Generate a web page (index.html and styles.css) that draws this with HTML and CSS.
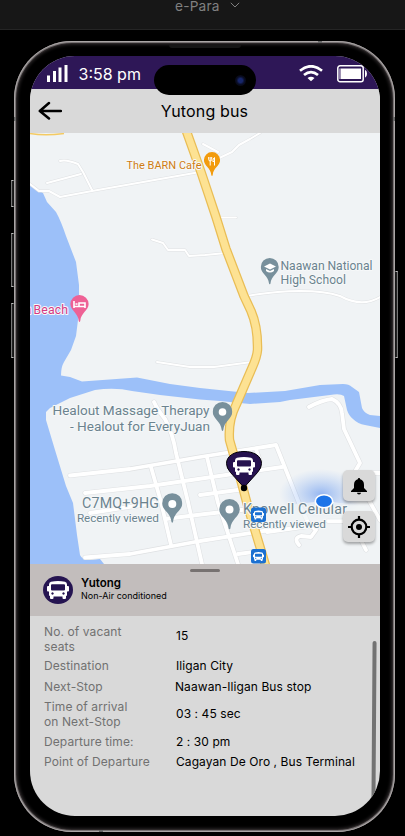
FILE: index.html
```html
<!DOCTYPE html>
<html lang="en">
<head>
<meta charset="utf-8">
<title>e-Para</title>
<link rel="stylesheet" href="styles.css">
</head>
<body>
<svg class="defs" aria-hidden="true">
  <symbol id="bus" viewBox="0 0 22 18">
    <path fill="currentColor" fill-rule="evenodd" d="M4 0.8Q11-.8 18 .8Q20 1.3 20 3.5V5h1q1 0 1 1v3.5q0 1-1 1h-1V14q0 1-1 1V17q0 1-1 1h-1.500q-1 0-1-1V15.500H6.500V17q0 1-1 1H4q-1 0-1-1V15q-1 0-1-1V10.500H1q-1 0-1-1V6q0-1 1-1H2V3.500Q2 1.300 4 .8ZM5 3.300Q4 3.300 4 4.300V8.500q0 1 1 1H17q1 0 1-1V4.300q0-1-1-1ZM5.500 11.300a1.200 1.200 0 1 0 .01 0ZM16.500 11.300a1.200 1.200 0 1 0 .01 0Z"/>
  </symbol>
  <symbol id="pin" viewBox="0 0 20 29">
    <path fill="currentColor" d="M10 0A9.800 9.800 0 0 0 .2 9.800C.2 17 8.500 19 9.200 28Q10 30 10.800 28C11.500 19 19.800 17 19.800 9.800A9.800 9.800 0 0 0 10 0Z"/>
  </symbol>
</svg>

<header class="toolbar">
  <span class="toolbar-title">e-Para</span>
  <svg class="chevron" width="10" height="6" viewBox="0 0 10 6"><path d="M.8.8 5 5 9.200.8"/></svg>
</header>

<main class="phone">
  <i class="side-button mute"></i><i class="side-button volume-up"></i><i class="side-button volume-down"></i><i class="side-button power"></i>
  <i class="antenna a1"></i><i class="antenna a2"></i><i class="antenna a3"></i><i class="antenna a4"></i>
  <i class="speaker"></i>
  <div class="island"><i class="camera"></i></div>
  <div class="screen">
    <div class="status">
      <svg class="signal" width="21" height="17" viewBox="0 0 21 17" fill="#fff"><path d="M0 10.500h3V17H0ZM6 6h3v11H6ZM11.500 2.500h3V17h-3ZM17.500 0h3v17h-3Z"/></svg>
      <span class="time">3:58 pm</span>
      <svg class="wifi" width="24" height="17" viewBox="0 0 24 17" fill="none" stroke="#fff" stroke-width="2.700"><path d="M1 5.700Q12-3.200 23 5.700M5 10Q12 4.300 19 10"/><path d="M8.500 13Q12 10.300 15.500 13L12 16.300Z" fill="#fff" stroke="none"/></svg>
      <svg class="battery" width="31" height="18" viewBox="0 0 31 18"><rect x=".8" y=".8" width="25.400" height="15.900" rx="2.300" fill="none" stroke="#fff" stroke-width="1.500"/><path fill="#fff" d="M3.500 3.500h20.500v10.500H3.500ZM28 4.800q2 1 2 4t-2 4Z"/><path d="M2.800 3.500v10.500" stroke="#b5a9ca"/></svg>
    </div>
    <div class="appbar">
      <svg class="back" width="24" height="20" viewBox="0 0 24 20"><path d="M23 10H1.800M11 2 1.800 10 11 17.500"/></svg>
      <h1>Yutong bus</h1>
    </div>
    <div class="map">
      <svg width="350" height="431" viewBox="30 133 350 431">
        <defs>
          <radialGradient id="beam"><stop offset="0" stop-color="#4c86ee" stop-opacity=".55"/><stop offset=".4" stop-color="#6b9cf0" stop-opacity=".35"/><stop offset="1" stop-color="#8db5f5" stop-opacity="0"/></radialGradient>
        </defs>
        <rect x="30" y="133" width="350" height="431" fill="#f0f3f5"/>
        <path fill="#9cc0f9" d="M30 184 38 190 43 193 47 202 56 212Q61 221 66 236L76 262 79 285V312L76 336 71 350 64 362Q61 367 61 375.500L70 377 82 381.500 137 377.500 170 384 200 388 248 393 285 391 320 385 343 384Q349 384 352 387L359 392 362 408Q364 413 370 415L380 416V428L365 425Q358 424 353 419 349 416 347 410L344 396Q340 393 330 395L290 400 280 402 250 404 220 401 200 399.500 160 395 132 391Q115 387 95 390L70 398 50 408 46 412V420L55 450 66 486 73 503 77 535 80 555Q82 560 90 560L100 559 104 564H30Z"/>
        <g class="road-edge">
          <path id="r1" d="M30 184 39 191H49L60 197 92 191 200 172M60 161Q66 159 78 164L83 172 92 190M47 183 81 174"/>
          <path id="r2" d="M152 239.500 163 243 168 250H185L189 256 205 255 226 253M218 217.500H236M247 296Q275 291 300 291T340 296Q362 308 380 297"/>
          <path id="r3" d="M203 144 218 152M213 161 232 152 239 145 250 139 260 133M157 362 190 367 214 367 252 362"/>
        </g>
        <g class="road"><use href="#r1"/><use href="#r2"/><use href="#r3"/></g>
        <g class="street-edge">
          <path id="s1" d="M154 402Q157 409 165 419 173 434 176 453L188 502 202 564M70 475.500 130 469 200 457 276 445 299 503M85 493 150 486 205 478 282 467"/>
          <path id="s2" d="M151 467 161 502 171 545M165 519 205 514 250 509M85 557.500 130 554 200 541 270 530M207 457 218 503 238 564M256 449 260 461M200 495 245 489M90 513 155 503"/>
          <path id="s3" d="M309 407Q322 400 332 399 341 403 342 413L344 429 360 463 347 485M366 473H380M366 495 380 520M328 521 344 521M299 545Q293 538 301 536L311 537 316 530 309 524 301 508M238 554 260 551M359 536 366 550M267 532 310 526"/>
        </g>
        <g class="street"><use href="#s1"/><use href="#s2"/><use href="#s3"/></g>
        <path d="M30 133.500Q45 136 64 133.500" fill="none" stroke="#f4ca62" stroke-width="1.500"/>
        <g class="highway-edge">
          <path id="hw" d="M186 130 201 172 216 217 226 249 244 296 251 311Q258 327 257.500 350 257 357 252 368L236 405Q228 421 229.500 440L240 477 248 507 266 567"/>
        </g>
        <g class="highway"><use href="#hw"/></g>
        <ellipse cx="321" cy="494" rx="42" ry="25" fill="url(#beam)"/>
        <path d="M278 506 324 501 365 506V520H278Z" fill="#f0f3f5" opacity=".7"/>

        <g class="label">
          <text class="orange" x="126.500" y="169" font-size="11" textLength="75">The BARN Cafe</text>
          <text class="pink" x="33.500" y="314" font-size="12.300" textLength="34.500">Beach</text>
          <text class="pink" x="24.500" y="314" font-size="12.300">n</text>
          <text x="280.500" y="269.500" font-size="12.200" textLength="92">Naawan National</text>
          <text x="280.500" y="284" font-size="12.200" textLength="65.500">High School</text>
          <text x="52.500" y="414.500" font-size="13.600" textLength="157">Healout Massage Therapy</text>
          <text x="70" y="430.500" font-size="13.600" textLength="140">- Healout for EveryJuan</text>
          <text x="82" y="508" font-size="14.300" textLength="77">C7MQ+9HG</text>
          <text x="77" y="522" font-size="11.800" textLength="82">Recently viewed</text>
          <text x="243" y="513.500" font-size="14.300" textLength="104">Knowell Cellular</text>
          <text x="243" y="528" font-size="11.800" textLength="83">Recently viewed</text>
        </g>

        <use href="#pin" x="203.500" y="152" width="17" height="24" color="#f29b0d"/>
        <path d="M208.700 157v2.500q0 1.500 1.500 1.500t1.500-1.500v-2.500M210.200 157v8.500M214.500 165.500v-8q-1.700 1-1.700 4h1.700" fill="none" stroke="#fff" stroke-width="1"/>
        <use href="#pin" x="70" y="295" width="19" height="27" color="#ee6195"/>
        <path d="M74 301v7M74 306.500H85V308M85 306v-3h-6v3M75.500 304h2" fill="none" stroke="#fff" stroke-width="1.600"/>
        <use href="#pin" x="260.500" y="258" width="18.500" height="26.500" color="#78909c"/>
        <path d="m264 266.500 6-3 6 3-6 3Zm2 2.500 4 2 4-2v2q-4 3-8 0Z" fill="#fff"/>
        <use href="#pin" x="212.500" y="402" width="20" height="29" color="#78909c"/><circle cx="222.500" cy="412" r="3.800" fill="#fff"/>
        <use href="#pin" x="162" y="493" width="20.500" height="30" color="#78909c"/><circle cx="172.300" cy="504" r="4" fill="#fff"/>
        <use href="#pin" x="219" y="499" width="21" height="30.500" color="#78909c"/><circle cx="229.500" cy="509.500" r="4" fill="#fff"/>

        <g color="#fff">
          <rect x="251" y="507.500" width="15" height="14.500" rx="2.500" fill="#1b70d1"/><use href="#bus" x="253" y="510" width="11" height="10"/>
          <rect x="251" y="549" width="15" height="14.500" rx="2.500" fill="#1b70d1"/><use href="#bus" x="253" y="551.500" width="11" height="10"/>
        </g>
        <path d="M244 487.500 230.500 472.500Q226.500 468 226.500 463.500C226.500 456 234 451.500 244 451.500S261.500 456 261.500 463.500Q261.500 468 257.500 472.500Z" fill="#26124f" stroke="#050208"/>
        <circle cx="244" cy="488" r="3.200" fill="#000"/>
        <use href="#bus" x="233" y="457" width="22" height="18" color="#fff"/>
        <ellipse cx="324" cy="501.300" rx="8.700" ry="6.500" fill="#1c74e8" stroke="#fff" stroke-width="1.600"/>
      </svg>
      <div class="map-tools">
        <button><svg width="18" height="18" viewBox="0 0 18 18"><path d="M9 1q1.200 0 1.200 1.300Q14 3.300 14 8v3l3 3v1H1v-1l3-3V8q0-4.700 3.800-5.700Q7.800 1 9 1ZM7 15.800h4q0 1.700-2 1.700t-2-1.700Z"/></svg></button>
        <button><svg width="22" height="22" viewBox="0 0 22 22"><circle cx="11" cy="11" r="7.300" fill="none" stroke="#000" stroke-width="2.200"/><circle cx="11" cy="11" r="3"/><path d="M11 0v4M11 18v4M0 11h4M18 11h4" stroke="#000" stroke-width="2.200"/></svg></button>
      </div>
    </div>
    <section class="sheet-head">
      <i class="handle"></i>
      <div class="avatar"><svg width="22" height="18"><use href="#bus" width="22" height="18"/></svg></div>
      <div><h2>Yutong</h2><p>Non-Air conditioned</p></div>
    </section>
    <dl class="details">
      <div class="row vacant"><dt>No. of vacant<br>seats</dt><dd>15</dd></div>
      <div class="row destination"><dt>Destination</dt><dd>Iligan City</dd></div>
      <div class="row next"><dt>Next-Stop</dt><dd>Naawan-Iligan Bus stop</dd></div>
      <div class="row arrival"><dt>Time of arrival<br>on Next-Stop</dt><dd>03 : 45 sec</dd></div>
      <div class="row departure"><dt>Departure time:</dt><dd>2 : 30 pm</dd></div>
      <div class="row origin"><dt>Point of Departure</dt><dd>Cagayan De Oro , Bus Terminal</dd></div>
      <i class="scrollbar"></i>
    </dl>
  </div>
</main>
</body>
</html>
```
FILE: styles.css
```css
* { box-sizing: border-box; }
body { margin: 0; height: 836px; overflow: hidden; background: #000; font-family: Inter, sans-serif; }
h1, h2, p, dl, dd { margin: 0; }
svg { display: block; flex: none; }
.defs { position: absolute; width: 0; height: 0; }

.toolbar { height: 30px; padding: 0 0 18px 175px; display: flex; align-items: center; background: #171717; border-bottom: 1px solid #252525; color: #808080; }
.toolbar-title { width: 55px; font-size: 13.7px; line-height: 14px; letter-spacing: .2px; }
.chevron { fill: none; stroke: #808080; margin-top: -1px; }

.phone { position: relative; width: 381px; height: 791px; margin: 11px 0 0 14px; padding: 15px 15px 16px 16px; border-radius: 58px; background: #000; box-shadow: inset 0 0 0 1px #aaa6a6, inset 0 0 0 2px #777273, inset 0 0 0 3px #292526, inset 0 0 3px 4px #242122; }
.side-button { position: absolute; width: 3px; border: 1px solid #aaa; border-color: #bbb #161616 #bbb #777; background: #222; }
.mute { left: -3px; top: 139px; height: 27px; }
.volume-up { left: -3px; top: 192px; height: 54px; }
.volume-down { left: -3px; top: 262px; height: 55px; }
.power { right: -3px; top: 230px; height: 87px; border-color: #bbb #777 #bbb #161616; }
.antenna { position: absolute; background: #666; }
.a1, .a2 { width: 2px; height: 4px; }
.a1 { left: 0; top: 76px; }
.a2 { right: 0; top: 76px; }
.a3, .a4 { width: 4px; height: 2px; }
.a3 { top: 0; left: 304px; }
.a4 { bottom: 0; left: 85px; }
.speaker { position: absolute; top: 4px; left: 155px; width: 72px; height: 3px; background: #161616; border-radius: 0 0 4px 4px; }
.island { position: absolute; z-index: 2; left: 140px; top: 24px; width: 102px; height: 30px; border-radius: 15px; background: #000; }
.camera { position: absolute; left: 81px; top: 10px; width: 11px; height: 11px; border-radius: 50%; background: radial-gradient(circle at 50% 50%, #17266a 0 2px, #090d24 4px, #07070f 6px); }

.screen { height: 760px; border-radius: 45px; overflow: hidden; background: #d9d9d9; }
.status { height: 33px; background: #2e1757; display: flex; align-items: flex-start; padding: 9px 12px 0 17px; color: #fff; }
.time { font-size: 16px; line-height: 18px; width: 220px; margin-left: 10.5px; white-space: nowrap; }
.wifi { margin-right: 14px; }

.appbar { height: 44px; padding: 0 28px 0 8px; display: flex; align-items: center; background: #d9d9d9; }
.back { fill: none; stroke: #000; stroke-width: 2.5; stroke-linecap: round; stroke-linejoin: round; }
.appbar h1 { flex: 1; padding-right: 5px; text-align: center; font-size: 16px; font-weight: 400; line-height: 20px; letter-spacing: .15px; }

.map { position: relative; height: 431px; overflow: hidden; }
.road-edge, .street-edge, .highway-edge, .road, .street, .highway { fill: none; stroke-linejoin: round; stroke-linecap: round; }
.road-edge { stroke: #dfe1e3; stroke-width: 3; }
.street-edge { stroke: #dfe1e3; stroke-width: 5; }
.road { stroke: #fff; stroke-width: 2; }
.street { stroke: #fff; stroke-width: 3.8; }
.highway-edge { stroke: #e9bd55; stroke-width: 9.5; }
.highway { stroke: #fde293; stroke-width: 7; }
.label { font-family: Roboto, sans-serif; fill: #6b838f; stroke: #f6f8f9; stroke-width: 2; paint-order: stroke; stroke-linejoin: round; }
.orange { fill: #cf7c14; }
.pink { fill: #d53883; }
.map-tools { position: absolute; right: 5px; top: 337px; display: grid; gap: 10px; }
.map-tools button { width: 32px; height: 31px; padding: 0; border: 0; border-radius: 5px; background: #d9d9d9; box-shadow: 0 2px 3px #0005; display: grid; place-items: center; }

.sheet-head { position: relative; height: 52px; padding: 12px 13px 0; display: flex; gap: 8px; background: #c2bdbc; }
.handle { position: absolute; left: 160px; top: 5px; width: 30px; height: 2.5px; border-radius: 2px; background: #777271; }
.avatar { width: 30px; height: 28px; border-radius: 50%; background: #251451; color: #fff; display: grid; place-items: center; }
.sheet-head h2 { font-size: 11.5px; font-weight: 600; line-height: 15px; }
.sheet-head p { font-size: 9px; line-height: 10px; }

.details { position: relative; height: 200px; padding: 9px 14px; font-size: 12px; line-height: 14.5px; }
.row { display: grid; grid-template-columns: 132px 1fr; align-items: center; white-space: nowrap; }
.row dt { color: #717171; letter-spacing: .1px; }
.row dd { letter-spacing: .08px; }
.vacant dd { padding-bottom: 7px; }
.destination { margin-top: 5px; }
.next { margin-top: 6px; }
.next dd { margin-left: -1px; }
.arrival { margin-top: 6px; }
.departure { margin-top: 6px; }
.origin { margin-top: 5px; }
.scrollbar { position: absolute; right: 4px; top: 25px; width: 4px; height: 165px; border-radius: 2px; background: #737373; transform: rotate(.4deg); }
```
